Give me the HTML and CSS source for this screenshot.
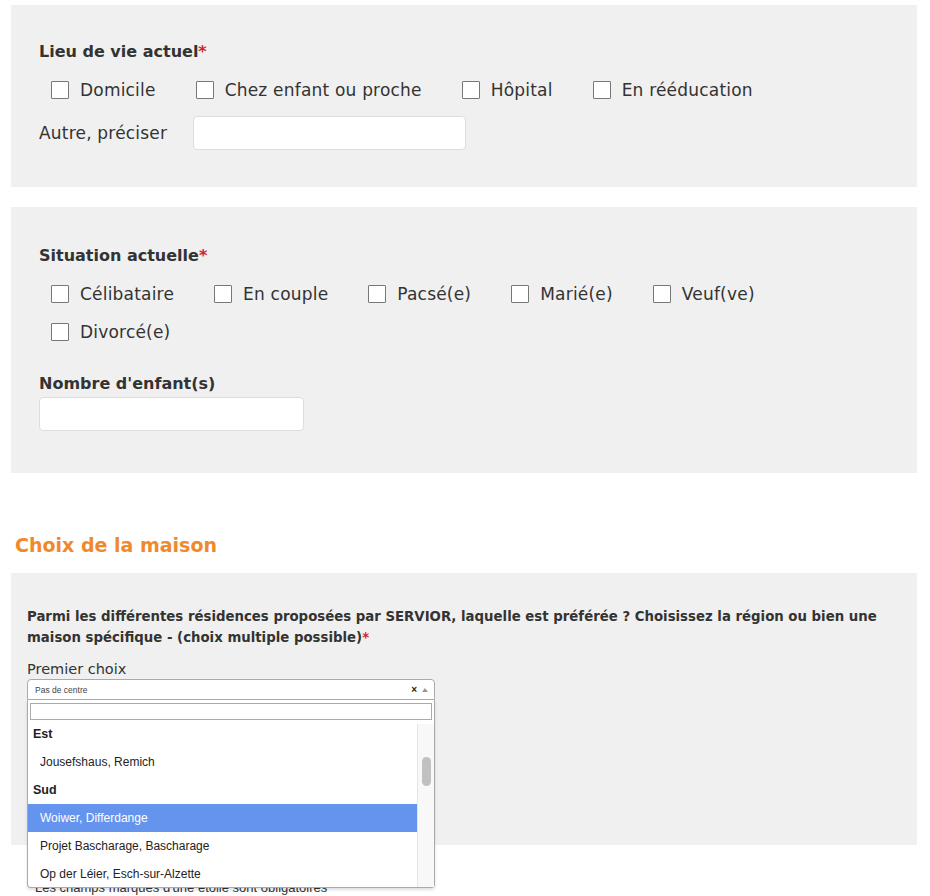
FILE: index.html
```html
<!DOCTYPE html>
<html lang="fr">
<head>
<meta charset="utf-8">
<title>Formulaire</title>
<link rel="stylesheet" href="styles.css">
</head>
<body>
<div class="page">
  <section class="panel panel-lieu">
    <h3 class="q-title">Lieu de vie actuel<span class="req">*</span></h3>
    <div class="checks">
      <label class="check"><input type="checkbox"><span>Domicile</span></label>
      <label class="check"><input type="checkbox"><span>Chez enfant ou proche</span></label>
      <label class="check"><input type="checkbox"><span>Hôpital</span></label>
      <label class="check"><input type="checkbox"><span>En rééducation</span></label>
    </div>
    <div class="other-row">
      <label class="other-label">Autre, préciser</label>
      <input type="text" class="text-input other-input">
    </div>
  </section>

  <section class="panel panel-situation">
    <h3 class="q-title">Situation actuelle<span class="req">*</span></h3>
    <div class="checks checks-wrap">
      <label class="check"><input type="checkbox"><span>Célibataire</span></label>
      <label class="check"><input type="checkbox"><span>En couple</span></label>
      <label class="check"><input type="checkbox"><span>Pacsé(e)</span></label>
      <label class="check"><input type="checkbox"><span>Marié(e)</span></label>
      <label class="check"><input type="checkbox"><span>Veuf(ve)</span></label>
      <label class="check"><input type="checkbox"><span>Divorcé(e)</span></label>
    </div>
    <h3 class="q-title q-enfants">Nombre d'enfant(s)</h3>
    <input type="text" class="text-input enfants-input">
  </section>

  <h2 class="section-title">Choix de la maison</h2>

  <section class="panel panel-maison">
    <p class="q-long">Parmi les différentes résidences proposées par SERVIOR, laquelle est préférée ? Choisissez la région ou bien une maison spécifique - (choix multiple possible)<span class="req">*</span></p>
    <div class="field-label">Premier choix</div>
    <div class="chosen">
      <div class="chosen-single">
        <span class="chosen-value">Pas de centre</span>
        <span class="chosen-clear">×</span>
        <span class="chosen-arrow"></span>
      </div>
      <div class="chosen-drop">
        <div class="chosen-search"><input type="text"></div>
        <div class="chosen-results">
          <ul class="results-list">
            <li class="group">Est</li>
            <li class="opt">Jousefshaus, Remich</li>
            <li class="group">Sud</li>
            <li class="opt highlighted">Woiwer, Differdange</li>
            <li class="opt">Projet Bascharage, Bascharage</li>
            <li class="opt">Op der Léier, Esch-sur-Alzette</li>
          </ul>
          <div class="scrollbar"><div class="thumb"></div></div>
        </div>
      </div>
    </div>
  </section>

  <p class="note">Les champs marqués d'une étoile sont obligatoires</p>
</div>
</body>
</html>
```
FILE: styles.css
```css
* { box-sizing: border-box; }

html, body {
  margin: 0;
  padding: 0;
  background: #ffffff;
}

body {
  font-family: "DejaVu Sans", "Noto Sans", Arial, sans-serif;
  color: #333333;
}

.page {
  width: 906px;
  margin-left: 11px;
  padding-top: 5px;
}

.panel {
  background: #f0f0f0;
}

.panel-lieu {
  padding: 35px 28px 37px;
}

.panel-situation {
  margin-top: 20px;
  padding: 37px 28px 42px;
}

.q-title {
  margin: 0;
  font-size: 16px;
  line-height: 24px;
  font-weight: bold;
  color: #333333;
}

.req {
  color: #d3222a;
}

.checks {
  display: flex;
  flex-wrap: wrap;
  column-gap: 40px;
  row-gap: 14px;
  margin-top: 14px;
  padding-left: 12px;
}

.checks-wrap {
  max-width: 800px;
}

.check {
  display: flex;
  align-items: center;
  gap: 11px;
  height: 24px;
  font-size: 17px;
  letter-spacing: 0.2px;
  color: #333333;
}

.check input {
  appearance: none;
  -webkit-appearance: none;
  margin: 0;
  width: 18px;
  height: 18px;
  background: #ffffff;
  border: 1px solid #777777;
  border-radius: 1px;
}

.other-row {
  display: flex;
  align-items: center;
  margin-top: 14px;
}

.other-label {
  width: 154px;
  font-size: 17px;
  letter-spacing: 0.2px;
}

.text-input {
  display: block;
  height: 34px;
  background: #ffffff;
  border: 1px solid #dddddd;
  border-radius: 4px;
  margin: 0;
  font: inherit;
}

.other-input {
  width: 273px;
}

.q-enfants {
  margin-top: 28px;
}

.enfants-input {
  width: 265px;
  height: 34px;
  margin-top: 1px;
}

.section-title {
  margin: 0;
  padding: 59px 0 0 4px;
  font-size: 19px;
  line-height: 26px;
  font-weight: bold;
  color: #f0892c;
}

.panel-maison {
  margin-top: 15px;
  padding: 33px 16px 0;
  height: 272px;
}

.q-long {
  margin: 0;
  font-size: 13.3px;
  line-height: 21px;
  font-weight: bold;
  color: #333333;
}

.field-label {
  margin-top: 11px;
  font-size: 14.5px;
  line-height: 20px;
  color: #333333;
}

.chosen {
  position: relative;
  width: 408px;
  margin-top: 0;
  font-family: "Liberation Sans", Arial, sans-serif;
}

.chosen-single {
  display: flex;
  align-items: center;
  height: 21px;
  padding: 0 6px 0 7px;
  background: #ffffff;
  border: 1px solid #aaaaaa;
  border-radius: 4px 4px 0 0;
  color: #444444;
}

.chosen-value {
  flex: 1;
  font-size: 8.5px;
}

.chosen-clear {
  font-size: 10px;
  font-weight: bold;
  color: #222222;
  line-height: 10px;
}

.chosen-arrow {
  width: 0;
  height: 0;
  margin-left: 5px;
  border-left: 3.5px solid transparent;
  border-right: 3.5px solid transparent;
  border-bottom: 4px solid #999999;
}

.chosen-drop {
  position: absolute;
  top: 100%;
  left: 0;
  width: 100%;
  z-index: 10;
  background: #ffffff;
  border: 1px solid #aaaaaa;
  border-top: 0;
  border-radius: 0 0 4px 4px;
  box-shadow: 0 2px 3px rgba(0, 0, 0, 0.12);
}

.chosen-search {
  padding: 3px 2px 4px;
}

.chosen-search input {
  display: block;
  width: 100%;
  height: 17px;
  margin: 0;
  border: 1px solid #aaaaaa;
  background: #ffffff;
}

.chosen-results {
  position: relative;
  height: 163px;
  overflow: hidden;
  padding-right: 17px;
}

.results-list {
  list-style: none;
  margin: -4px 0 0;
  padding: 0;
}

.results-list li {
  height: 28px;
  line-height: 28px;
  font-size: 12px;
  color: #222222;
}

.results-list .group {
  padding-left: 5px;
  font-weight: bold;
  font-size: 12.5px;
}

.results-list .opt {
  padding-left: 12px;
}

.results-list .highlighted {
  background: #6494ee;
  color: #ffffff;
}

.scrollbar {
  position: absolute;
  top: 0;
  right: 0;
  bottom: 0;
  width: 17px;
  background: #f8f8f8;
  border-left: 1px solid #e6e6e6;
}

.thumb {
  position: absolute;
  top: 33px;
  left: 4px;
  width: 9px;
  height: 29px;
  border-radius: 5px;
  background: #c1c1c1;
}

.note {
  margin: 35px 0 0 24px;
  font-family: "Liberation Sans", Arial, sans-serif;
  font-size: 13px;
  line-height: 16px;
  color: #333333;
}
```
